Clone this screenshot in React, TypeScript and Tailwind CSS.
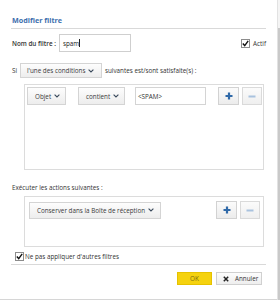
import React from "react";

const Chevron = () => (
  <svg width="6" height="4" viewBox="0 0 6 4" className="ml-[3px] shrink-0">
    <path d="M0.6 0.6 L3 3 L5.4 0.6" fill="none" stroke="#3a4a5c" strokeWidth="1.1" />
  </svg>
);

const Check = () => (
  <span className="w-[9px] h-[9px] border border-[#8c8c8c] bg-white flex items-center justify-center shrink-0">
    <svg width="7" height="7" viewBox="0 0 7 7">
      <path d="M0.8 3.6 L2.7 5.6 L6.2 0.9" fill="none" stroke="#111" strokeWidth="1.4" />
    </svg>
  </span>
);

const AddButton = () => (
  <div className="w-[21px] h-[18px] border border-[#d2d2d2] bg-gradient-to-b from-[#fbfbfb] to-[#ececec] flex items-center justify-center">
    <svg width="8" height="8" viewBox="0 0 8 8">
      <path d="M4 0.5 V7.5 M0.5 4 H7.5" stroke="#2f69a8" strokeWidth="2.2" />
    </svg>
  </div>
);

const RemoveButton = () => (
  <div className="w-[20px] h-[18px] border border-[#dadada] bg-gradient-to-b from-[#fbfbfb] to-[#efefef] flex items-center justify-center">
    <svg width="8" height="3" viewBox="0 0 8 3">
      <path d="M0.5 1.5 H7.5" stroke="#a9c2de" strokeWidth="2" />
    </svg>
  </div>
);

const SelectBox = ({ label, className }: { label: string; className: string }) => (
  <div
    className={
      "border border-[#d4d4d4] bg-gradient-to-b from-[#fdfdfd] to-[#ededed] flex items-center text-[#3a3a3a] " +
      className
    }
  >
    <span className="whitespace-nowrap">{label}</span>
    <Chevron />
  </div>
);

const App = () => {
  return (
    <div
      className="w-[280px] h-[300px] bg-white flex overflow-hidden text-[6.3px] leading-[9px] text-[#3c3c3c]"
      style={{ fontFamily: '"Open Sans", "Noto Sans", sans-serif' }}
    >
      <div className="w-[277px] h-[300px] border-b border-[#d6d6d6] flex flex-col px-[11px]">
        {/* titre */}
        <div className="h-[29px] pt-[16px] border-b border-[#d9d9d9] shrink-0">
          <div className="pl-[1px] font-bold text-[7.2px] text-[#3e6fae]">Modifier filtre</div>
        </div>

        {/* nom du filtre */}
        <div className="mt-[5px] h-[18px] flex items-center shrink-0">
          <span className="pl-[1px] font-semibold text-[#333] whitespace-nowrap">Nom du filtre :</span>
          <div className="ml-[3px] w-[72px] h-[18px] border border-[#cfcfcf] flex items-center pl-[3px] text-[#222]">
            spam<span className="w-px h-[8px] bg-[#222]" />
          </div>
          <div className="flex-1" />
          <Check />
          <span className="ml-[3px] text-[#333]">Actif</span>
        </div>

        {/* conditions */}
        <div className="mt-[11px] h-[15px] flex items-center shrink-0">
          <span className="pl-[1px] w-[9px] text-[#333]">Si</span>
          <SelectBox label="l'une des conditions" className="w-[82px] h-[15px] pl-[6px]" />
          <span className="ml-[3px] whitespace-nowrap text-[#333]">suivantes est/sont satisfaite(s) :</span>
        </div>

        <div className="mt-[6px] ml-[13px] w-[240px] h-[86px] border border-[#dcdcdc] pt-[2px] pl-[2px] shrink-0">
          <div className="flex items-center">
            <SelectBox label="Objet" className="w-[39px] h-[18px] pl-[7px]" />
            <SelectBox label="contient" className="ml-[12px] w-[47px] h-[18px] pl-[7px]" />
            <div className="ml-[10px] w-[71px] h-[18px] border border-[#d4d4d4] flex items-center pl-[2px] text-[#333]">
              &lt;SPAM&gt;
            </div>
            <div className="ml-[12px]">
              <AddButton />
            </div>
            <div className="ml-[3px]">
              <RemoveButton />
            </div>
          </div>
        </div>

        {/* actions */}
        <div className="mt-[13px] pl-[1px] text-[#333] shrink-0">Exécuter les actions suivantes :</div>

        <div className="mt-[4px] ml-[13px] w-[240px] h-[51px] border border-[#dcdcdc] pt-[4px] pl-[4px] shrink-0">
          <div className="flex items-center">
            <div className="w-[132px] h-[17px] border border-[#d4d4d4] bg-gradient-to-b from-[#fdfdfd] to-[#ededed] flex items-center pl-[7px] text-[#3a3a3a]">
              <span className="whitespace-nowrap">Conserver dans la Boîte de réception</span>
              <Chevron />
            </div>
            <div className="ml-[55px]">
              <AddButton />
            </div>
            <div className="ml-[3px]">
              <RemoveButton />
            </div>
          </div>
        </div>

        <div className="mt-[5px] ml-[4px] flex items-center shrink-0">
          <Check />
          <span className="ml-[1px] text-[#333]">Ne pas appliquer d'autres filtres</span>
        </div>

        <div className="mt-[3px] h-px bg-[#d9d9d9] shrink-0" />

        {/* boutons */}
        <div className="mt-[7px] flex justify-end pr-[4px] shrink-0">
          <div className="w-[35px] h-[13px] bg-[#f5d20f] border border-[#e6c200] flex items-center justify-center text-[#7a6a10]">
            OK
          </div>
          <div className="ml-[4px] w-[46px] h-[13px] border border-[#d0d0d0] bg-gradient-to-b from-[#fdfdfd] to-[#eeeeee] flex items-center pl-[6px] text-[#333]">
            <svg width="6" height="6" viewBox="0 0 6 6">
              <path d="M0.8 0.8 L5.2 5.2 M5.2 0.8 L0.8 5.2" stroke="#222" strokeWidth="1.5" />
            </svg>
            <span className="ml-[6px]">Annuler</span>
          </div>
        </div>
      </div>
      <div className="flex-1 border-l border-[#e2e2e2] flex flex-col">
        <div className="h-[28px] bg-[#f4f4f4]" />
        <div className="flex-1 bg-[#c9c9c9]" />
      </div>
    </div>
  );
};

export default App;
